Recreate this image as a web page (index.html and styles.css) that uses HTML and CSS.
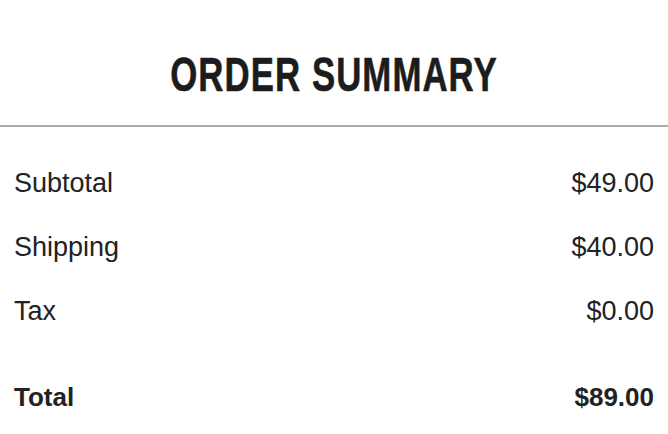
FILE: index.html
```html
<!DOCTYPE html>
<html lang="en">
<head>
  <meta charset="UTF-8">
  <title>Order Summary</title>
  <meta name="viewport" content="width=device-width, initial-scale=1">
  <link rel="stylesheet" href="styles.css">
</head>
<body>
  <header class="summary-head">
    <h1>Order Summary</h1>
  </header>
  <main class="summary">
    <div class="row"><span>Subtotal</span><span>$49.00</span></div>
    <div class="row"><span>Shipping</span><span>$40.00</span></div>
    <div class="row"><span>Tax</span><span>$0.00</span></div>
    <div class="row total"><span>Total</span><span>$89.00</span></div>
  </main>
</body>
</html>
```

FILE: styles.css
```css
body { font-family: "Liberation Sans", Arial, sans-serif; margin: 0; background: #fff; color: #222; }
.summary-head { height: 127px; box-sizing: border-box; padding-top: 50px; border-bottom: 2px solid #aaa; text-align: center; }
.summary-head h1 { margin: 0; font-weight: bold; font-size: 49px; text-transform: uppercase; color: #1c1c1c; line-height: 1; letter-spacing: 1.5px; transform: scaleX(0.71); -webkit-text-stroke: 0.6px #1c1c1c; }
.summary { padding: 24px 14px 0; }
.row { display: flex; justify-content: space-between; font-size: 27px; line-height: 64px; }
.total { margin-top: 22px; font-weight: bold; font-size: 26px; }
```
